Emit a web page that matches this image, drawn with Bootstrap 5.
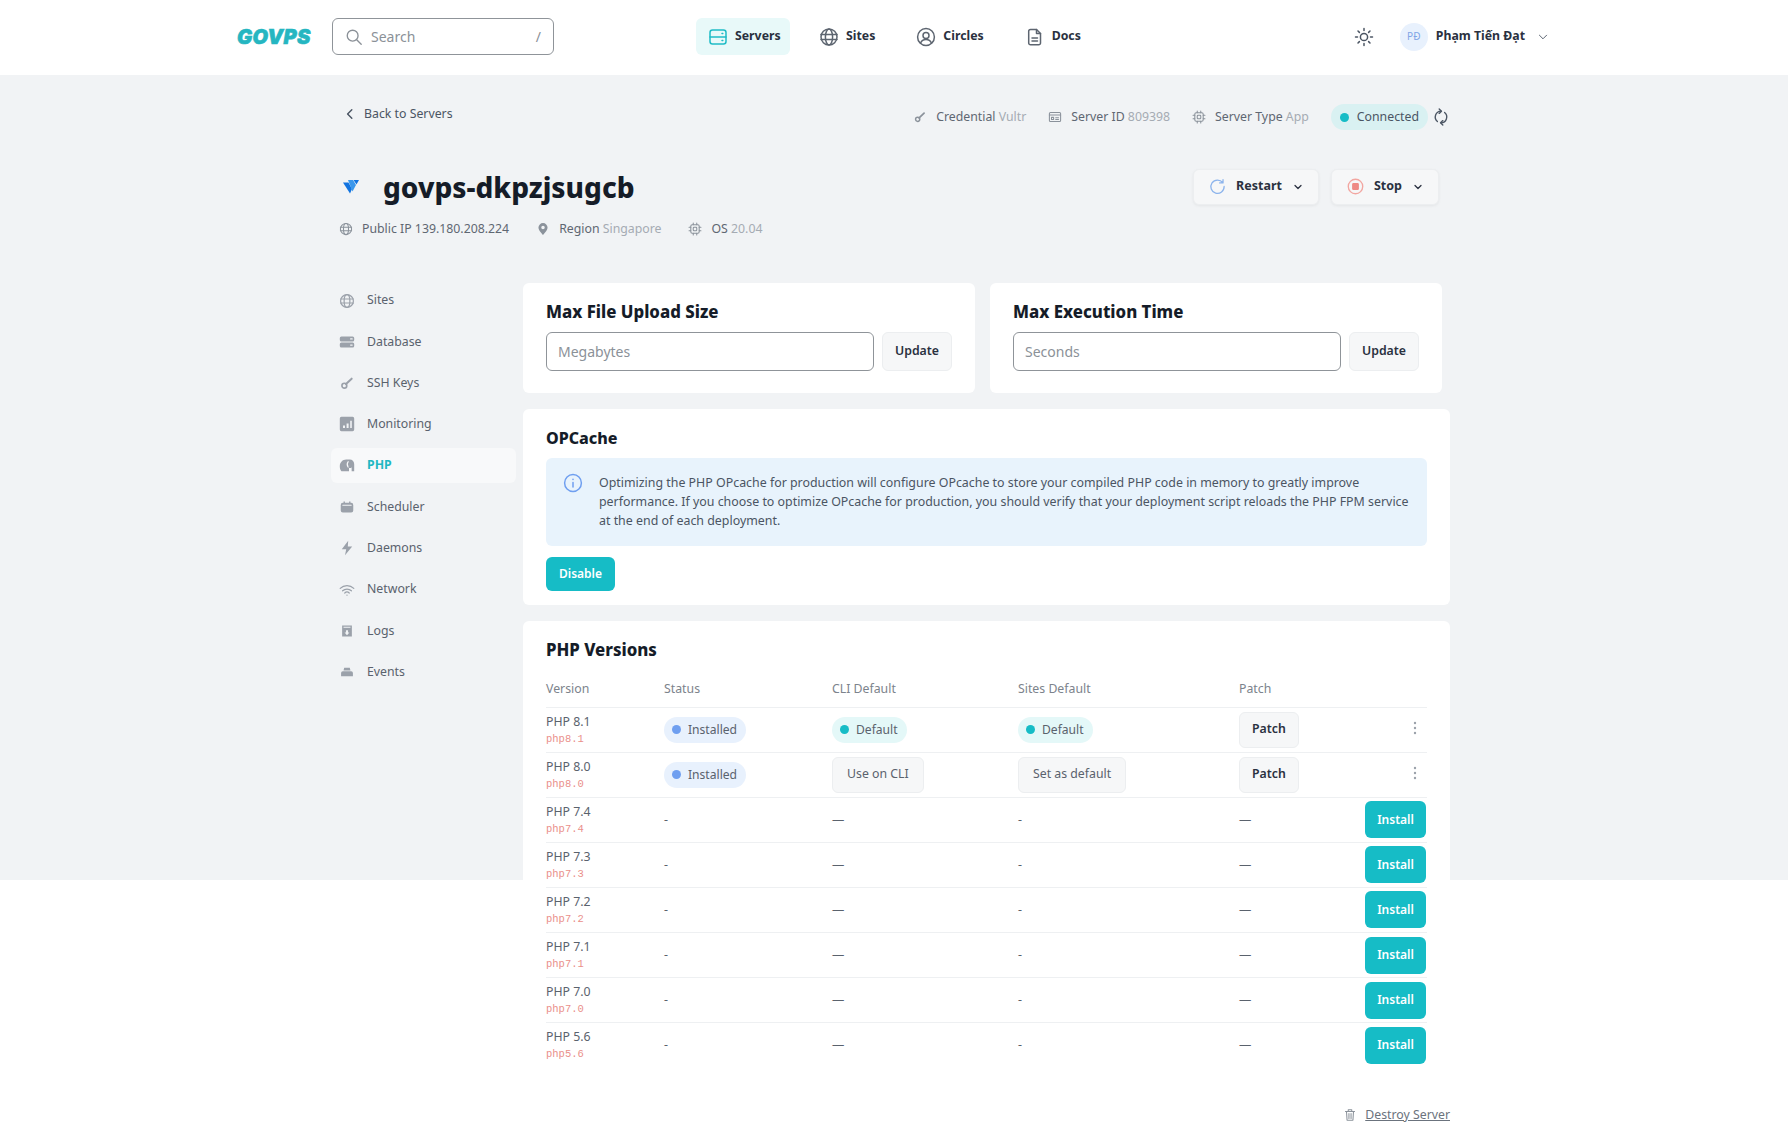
<!doctype html>
<html lang="en">
<head>
    <meta charset="utf-8">
    <meta name="viewport" content="width=device-width, initial-scale=1">
    <title>govps-dkpzjsugcb - PHP</title>
    <link href="https://cdn.jsdelivr.net/npm/bootstrap@5.3.3/dist/css/bootstrap.min.css" rel="stylesheet">
    <style>
        body { font-family: "Noto Sans", "Open Sans", sans-serif; font-size: 12.3px; color: #4b5563; background: #fff; }
        .ico { width: 18px; height: 18px; flex: none; fill: none; stroke: currentColor; stroke-width: 1.5; stroke-linecap: round; stroke-linejoin: round; }
        .ico-fill { fill: currentColor; stroke: none; }

        .topbar { height: 75px; padding: 0 239px 2px 237px; background: #fff; }
        .brand-logo { width: 95px; font-family: Inter, sans-serif; font-size: 20px; font-weight: 900; font-style: italic; color: #25b6c1; letter-spacing: .3px; -webkit-text-stroke: .6px #25b6c1; }
        .search-box { width: 222px; height: 37px; border: 1px solid #8f9499; border-radius: 6px; padding: 0 12px; margin-right: 142px; color: #8b9198; font-size: 14px; }
        .top-link { height: 37px; padding: 0 12px; margin-right: 17px; gap: 7px; border-radius: 6px; font-size: 12.3px; font-weight: 700; color: #2a3140; text-decoration: none; }
        .top-link .ico { width: 20px; height: 20px; color: #5d6570; }
        .top-link.on { width: 94px; background: #e8f9f9; }
        .top-link.on .ico { color: #1fbcc6; }
        .avatar { width: 28px; height: 28px; border-radius: 50%; background: #e8f1fd; color: #7fa5e6; font-size: 10px; }
        .user-name { font-size: 12.3px; font-weight: 700; color: #2a3140; margin-right: 12px; }

        .page-bg { background: linear-gradient(#f1f3f5, #f1f3f5) top / 100% 805px no-repeat; }
        .page-wrap { width: 1119px; margin-left: 331px; padding-top: 29px; }
        .meta-txt { font-size: 12.3px; color: #5f6772; gap: 9px; }
        .meta-txt .ico { width: 14px; height: 14px; color: #8b929b; }
        .meta-txt span { color: #a5abb3; }
        .back-link { color: #4b5563; font-size: 12.3px; text-decoration: none; padding-left: 13px; margin-top: -6px; }
        .back-link .ico { width: 12px; height: 12px; stroke-width: 2.4; }
        .conn-pill { height: 26px; padding: 0 9px; border-radius: 13px; background: #d9f1f2; color: #4b5563; font-weight: 400; font-size: 12.3px; }
        .dot { width: 9px; height: 9px; border-radius: 50%; background: #16bcc6; flex: none; }
        .dot-blue { background: #6f9ff0; }
        .server-name { font-size: 28px; font-weight: 800; color: #151c28; margin: 1px 0 0; line-height: 36px; }
        .act-btn { height: 36px; padding: 0 15px; background: #f6f7f8; border: 1px solid #eceef0; border-radius: 6px; box-shadow: 0 1px 3px rgba(0,0,0,.06); font-size: 12.5px; font-weight: 700; color: #2a3140; gap: 10px; }
        .act-btn .ico { width: 17px; height: 17px; }
        .act-btn .ico.caret { width: 10px; height: 10px; stroke-width: 2.5; margin-left: 1px; }

        .side-col { width: 192px; flex: none; padding-right: 7px; }
        .side-item { height: 35px; margin-bottom: 6.3px; padding: 0 0 0 8px; gap: 12px; background: transparent; border: 0; border-radius: 6px; color: #5a626d; font-size: 12.3px; }
        .side-item .ico { width: 16px; height: 16px; color: #9ba1aa; }
        .list-group-item.side-item.active { background: #f8f9fa; color: #1fb8c2; font-weight: 700; border: 0; margin-top: 0; }
        .main-col { width: 927px; flex: none; }

        .panel { border: 0; border-radius: 6px; padding: 18px 23px 0; background: #fff; }
        .panel-title { font-size: 16.8px; font-weight: 800; color: #151c28; line-height: 22px; margin: 0; }
        .panel-title.tight { font-size: 16px; }
        .mini-input { height: 39px; border: 1px solid #8f9499; border-radius: 6px; font-size: 14px; padding: 0 11px; box-shadow: none; }
        .mini-input::placeholder { color: #8b9198; }
        .soft-btn { height: 39px; width: 70px; flex: none; padding: 0; background: #f6f7f8; border: 1px solid #eceef0; border-radius: 6px; font-size: 12.3px; font-weight: 600; color: #2a3140; }
        .info-box { height: 88px; padding: 15px 14px 0 17px; margin: 9px 0 11px; background: #e8f3fc; border: 0; border-radius: 6px; color: #4b5563; font-size: 12.4px; line-height: 19px; gap: 16px; white-space: nowrap; }
        .info-box .ico { width: 20px; height: 20px; color: #6f9ff0; }
        .teal-btn { background: #16bcc6; border: 0; border-radius: 6px; color: #fff; font-size: 12px; font-weight: 600; }
        .teal-btn:hover { background: #12a9b2; color: #fff; }

        .ver-table { width: 881px; table-layout: fixed; margin: 10px 0 0; --bs-table-bg: transparent; }
        .ver-table th { height: 36px; padding: 0; font-weight: 400; color: #7c838c; font-size: 12.3px; border-bottom: 1px solid #eef0f2; vertical-align: middle; }
        .ver-table td { height: 45.1px; padding: 0; color: #5a626d; font-size: 12.3px; border-bottom: 1px solid #eef0f2; vertical-align: middle; }
        .ver-table tr:last-child td { border-bottom: 0; }
        .ver-name { line-height: 15px; }
        .ver-code { display: block; margin-top: 4px; font-family: "Liberation Mono", monospace; font-size: 10.5px; line-height: 13px; color: #ea8f8a; }
        .st-pill { height: 26px; padding: 0 9px 0 8px; border-radius: 13px; font-size: 12.1px; font-weight: 400; gap: 7px; color: #5a626d; }
        .st-blue { background: #e8f1fd; }
        .st-teal { background: #e4f8f8; }
        .tb-btn { height: 36px; padding: 0 14px; background: #f6f7f8; border: 1px solid #eceef0; border-radius: 6px; font-size: 12.3px; color: #5a626d; }
        .tb-btn.strong { padding: 0 12px; font-weight: 600; color: #2a3140; }
        .kebab { width: 14px; height: 14px; fill: #9ba1aa; margin-top: -4px; margin-right: 5px; }
        .install-btn { width: 61px; height: 37px; padding: 0; margin-right: 1px; }
        .dash { color: #7c838c; }

        .destroy-row { margin-top: 38px; color: #8b929b; font-size: 12.3px; }
        .destroy-row a { color: #6b737d; }
        .destroy-row .ico { width: 14px; height: 14px; }
    </style>
</head>
<body>
    <!-- iconos -->
    <svg width="0" height="0" class="position-absolute">
        <symbol id="i-globe" viewBox="0 0 20 20"><circle cx="10" cy="10" r="8"/><ellipse cx="10" cy="10" rx="3.6" ry="8"/><path d="M2 7.5h16M2 12.5h16"/></symbol>
        <symbol id="i-server" viewBox="0 0 20 20"><rect x="2" y="3" width="16" height="14" rx="2.5"/><path d="M2 10h16M14 6.5h.8M14 13.5h.8"/></symbol>
        <symbol id="i-circle" viewBox="0 0 20 20"><circle cx="10" cy="10" r="8.4"/><circle cx="10" cy="8.4" r="3"/><path d="M4.6 16c1-2.6 3-3.4 5.4-3.4s4.4.8 5.4 3.4"/></symbol>
        <symbol id="i-doc" viewBox="0 0 20 20"><path d="M5.5 2.5h6l4 4v9.5a1.8 1.8 0 0 1-1.8 1.8H5.5A1.8 1.8 0 0 1 3.7 16V4.3a1.8 1.8 0 0 1 1.8-1.8z"/><path d="M11.5 2.5v4h4M7 11h5.5M7 14h5.5"/></symbol>
        <symbol id="i-sun" viewBox="0 0 20 20"><circle cx="10" cy="10" r="3.6"/><path d="M10 1.5v2M10 16.5v2M1.5 10h2M16.500 10h2M4 4l1.400 1.400M14.600 14.600L16 16M4 16l1.400-1.400M14.600 5.400L16 4"/></symbol>
        <symbol id="i-search" viewBox="0 0 20 20"><circle cx="8.500" cy="8.500" r="6"/><path d="M13 13l5 5"/></symbol>
        <symbol id="i-down" viewBox="0 0 20 20"><path d="M4 7l6 6 6-6"/></symbol>
        <symbol id="i-left" viewBox="0 0 20 20"><path d="M13 3l-7 7 7 7"/></symbol>
        <symbol id="i-key" viewBox="-2 -2 24 24"><circle cx="6" cy="14" r="3.600" fill="none" stroke="currentColor" stroke-width="2.500"/><path d="M8.500 11.500L17 3.500" fill="none" stroke="currentColor" stroke-width="3"/></symbol>
        <symbol id="i-idcard" viewBox="0 0 20 20"><rect x="2" y="3.500" width="16" height="13" rx="1.500"/><path d="M2 7h16M5 10.500h3v3H5zM11 11h4M11 13.500h4"/></symbol>
        <symbol id="i-chip" viewBox="0 0 20 20"><rect x="4" y="4" width="12" height="12" rx="2"/><rect x="7.500" y="7.500" width="5" height="5" rx="1"/><path d="M7.500 1.500V4M12.500 1.500V4M7.500 16v2.500M12.500 16v2.500M1.500 7.500H4M1.500 12.500H4M16 7.500h2.500M16 12.500h2.500"/></symbol>
        <symbol id="i-sync" viewBox="0 0 20 20"><path d="M10 3.500A6.500 6.500 0 0 0 6 15M10 16.500A6.500 6.500 0 0 0 14 5"/><path d="M8 1l2.500 2.500L8 6M12 14l-2.500 2.500L12 19"/></symbol>
        <symbol id="i-pin" viewBox="0 0 20 20"><path d="M10 1.500a6.500 6.500 0 0 0-6.500 6.500c0 4.500 6.500 10.500 6.500 10.500S16.500 12.500 16.500 8A6.500 6.500 0 0 0 10 1.500zm0 9a2.500 2.500 0 1 1 0-5 2.500 2.500 0 0 1 0 5z"/></symbol>
        <symbol id="i-restart" viewBox="0 0 20 20"><path d="M16.200 5.500A7.800 7.800 0 1 0 17.800 10M16.500 1.800v4h-4"/></symbol>
        <symbol id="i-stop" viewBox="0 0 20 20"><circle cx="10" cy="10" r="8.500" fill="none" stroke="#f2a6a1" stroke-width="1.600"/><rect x="6" y="6" width="8" height="8" rx="1.500" fill="#ee8a85" stroke="none"/></symbol>
        <symbol id="i-db" viewBox="0 0 20 20"><rect x="1" y="3" width="18" height="6.400" rx="2"/><rect x="1" y="10.600" width="18" height="6.400" rx="2"/><path d="M14.500 6.200h2M14.500 13.800h2" stroke="#f1f3f5"/></symbol>
        <symbol id="i-chart" viewBox="0 0 20 20"><path fill-rule="evenodd" d="M3 1h14a2 2 0 0 1 2 2v14a2 2 0 0 1-2 2H3a2 2 0 0 1-2-2V3a2 2 0 0 1 2-2zm2 11v3h2.500v-3zm4.500-2.500V15H12V9.500zM14 6v9h2V6z"/></symbol>
        <symbol id="i-php" viewBox="0 0 20 20"><path d="M9 2C4.500 2 1 5.500 1 10.500c0 2.500.8 4.500 2 6h9.500v-4c1.500.3 2.700-.2 3.300-1v5H19V7.500C19 4.300 16.500 2 13.500 2z"/><path d="M11.500 4.500c-1.500 2-1.500 5 0 7" fill="none" stroke="#f8f9fa" stroke-width="1.300"/></symbol>
        <symbol id="i-cal" viewBox="-1.500 -1.500 23 23"><path d="M5 2h2v2h6V2h2v2h1a3 3 0 0 1 3 3v8a3 3 0 0 1-3 3H4a3 3 0 0 1-3-3V7a3 3 0 0 1 3-3h1z"/><path d="M4 7.500h12" stroke="#f1f3f5"/></symbol>
        <symbol id="i-bolt" viewBox="0 0 20 20"><path d="M11.500 1L3.500 11.500H9L7.500 19l9-11H11z"/></symbol>
        <symbol id="i-wifi" viewBox="0 0 20 20"><path d="M1.500 8a12 12 0 0 1 17 0M4.500 11a8 8 0 0 1 11 0M7.200 13.800a4 4 0 0 1 5.600 0M10 16.300v.2"/></symbol>
        <symbol id="i-logs" viewBox="-1.500 -1.500 23 23"><path fill-rule="evenodd" d="M3 2h14v16H3zm2 2v1.500h10V4zm3.500 5v3H6.500l3.500 4 3.500-4h-2V9z"/></symbol>
        <symbol id="i-events" viewBox="-1.500 -1.500 23 23"><path d="M6 4h8l1 4H5zM4 9h12a2.500 2.500 0 0 1 2.500 2.500V16h-17v-4.500A2.500 2.500 0 0 1 4 9z"/></symbol>
        <symbol id="i-info" viewBox="0 0 20 20"><circle cx="10" cy="10" r="8.400"/><path d="M10 9.500v4.500M10 6.200v.2"/></symbol>
        <symbol id="i-dots" viewBox="0 0 14 14"><circle cx="7" cy="2" r="1.200"/><circle cx="7" cy="7" r="1.200"/><circle cx="7" cy="12" r="1.200"/></symbol>
        <symbol id="i-trash" viewBox="0 0 20 20"><path d="M3.500 5h13M7.500 5V2.500h5V5M5 5l.8 12.500h8.400L15 5M8.500 8v7M11.500 8v7"/></symbol>
    </svg>

    <nav class="navbar topbar flex-nowrap justify-content-start">
        <a class="brand-logo text-decoration-none" href="#">GOVPS</a>
        <div class="search-box d-flex align-items-center gap-2">
            <svg class="ico"><use href="#i-search"/></svg>
            <span class="flex-grow-1">Search</span>
            <span>/</span>
        </div>
        <a class="top-link on d-flex align-items-center" href="#"><svg class="ico"><use href="#i-server"/></svg>Servers</a>
        <a class="top-link d-flex align-items-center" href="#"><svg class="ico"><use href="#i-globe"/></svg>Sites</a>
        <a class="top-link d-flex align-items-center" href="#"><svg class="ico"><use href="#i-circle"/></svg>Circles</a>
        <a class="top-link d-flex align-items-center" href="#"><svg class="ico"><use href="#i-doc"/></svg>Docs</a>
        <div class="ms-auto d-flex align-items-center">
            <svg class="ico" style="width:20px;height:20px;margin-right:26px"><use href="#i-sun"/></svg>
            <div class="avatar d-flex align-items-center justify-content-center me-2">PĐ</div>
            <span class="user-name">Phạm Tiến Đạt</span>
            <svg class="ico" style="width:12px;height:12px"><use href="#i-down"/></svg>
        </div>
    </nav>

    <div class="page-bg">
        <div class="page-wrap">
            <div class="d-flex justify-content-between align-items-center">
                <a class="back-link d-flex align-items-center gap-2" href="#"><svg class="ico"><use href="#i-left"/></svg>Back to Servers</a>
                <div class="d-flex align-items-center" style="gap:22px">
                    <div class="meta-txt d-flex align-items-center"><svg class="ico"><use href="#i-key"/></svg><div>Credential <span>Vultr</span></div></div>
                    <div class="meta-txt d-flex align-items-center"><svg class="ico"><use href="#i-idcard"/></svg><div>Server ID <span>809398</span></div></div>
                    <div class="meta-txt d-flex align-items-center"><svg class="ico"><use href="#i-chip"/></svg><div>Server Type <span>App</span></div></div>
                    <div class="d-flex align-items-center gap-1">
                        <div class="badge conn-pill d-flex align-items-center gap-2"><i class="dot"></i>Connected</div>
                        <svg class="ico" style="width:18px;height:18px"><use href="#i-sync"/></svg>
                    </div>
                </div>
            </div>

            <div class="d-flex justify-content-between align-items-center" style="margin-top:38px;padding:0 11px 0 12px">
                <div class="d-flex align-items-center">
                    <svg width="16" height="16" viewBox="0 0 16 16" style="margin-right:24px"><path d="M0 3.500h5.500l3.500 6.500-2 4.500z" fill="#1173e0"/><path d="M5 1h5l3 5-3.500 6.500z" fill="#3a97ec"/><path d="M10.500 1H16l-2.500 4.500z" fill="#1173e0"/></svg>
                    <h1 class="server-name">govps-dkpzjsugcb</h1>
                </div>
                <div class="d-flex" style="gap:12px">
                    <button class="btn act-btn d-flex align-items-center" type="button"><svg class="ico" style="color:#8cb4ec"><use href="#i-restart"/></svg>Restart<svg class="ico caret"><use href="#i-down"/></svg></button>
                    <button class="btn act-btn d-flex align-items-center" type="button"><svg class="ico"><use href="#i-stop"/></svg>Stop<svg class="ico caret"><use href="#i-down"/></svg></button>
                </div>
            </div>

            <div class="d-flex align-items-center" style="margin-top:14px;padding-left:8px;height:20px;gap:27px">
                <div class="meta-txt d-flex align-items-center"><svg class="ico"><use href="#i-globe"/></svg>Public IP 139.180.208.224</div>
                <div class="meta-txt d-flex align-items-center"><svg class="ico ico-fill"><use href="#i-pin"/></svg><div>Region <span>Singapore</span></div></div>
                <div class="meta-txt d-flex align-items-center"><svg class="ico"><use href="#i-chip"/></svg><div>OS <span>20.04</span></div></div>
            </div>

            <div class="d-flex" style="margin-top:44px">
                <div class="side-col">
                    <div class="list-group">
                        <a class="list-group-item side-item d-flex align-items-center" href="#"><svg class="ico"><use href="#i-globe"/></svg>Sites</a>
                        <a class="list-group-item side-item d-flex align-items-center" href="#"><svg class="ico ico-fill"><use href="#i-db"/></svg>Database</a>
                        <a class="list-group-item side-item d-flex align-items-center" href="#"><svg class="ico"><use href="#i-key"/></svg>SSH Keys</a>
                        <a class="list-group-item side-item d-flex align-items-center" href="#"><svg class="ico ico-fill"><use href="#i-chart"/></svg>Monitoring</a>
                        <a class="list-group-item side-item active d-flex align-items-center" href="#"><svg class="ico ico-fill"><use href="#i-php"/></svg>PHP</a>
                        <a class="list-group-item side-item d-flex align-items-center" href="#"><svg class="ico ico-fill"><use href="#i-cal"/></svg>Scheduler</a>
                        <a class="list-group-item side-item d-flex align-items-center" href="#"><svg class="ico ico-fill"><use href="#i-bolt"/></svg>Daemons</a>
                        <a class="list-group-item side-item d-flex align-items-center" href="#"><svg class="ico"><use href="#i-wifi"/></svg>Network</a>
                        <a class="list-group-item side-item d-flex align-items-center" href="#"><svg class="ico ico-fill"><use href="#i-logs"/></svg>Logs</a>
                        <a class="list-group-item side-item d-flex align-items-center" href="#"><svg class="ico ico-fill"><use href="#i-events"/></svg>Events</a>
                    </div>
                </div>

                <div class="main-col">
                    <div class="d-flex" style="width:919px;gap:15px">
                        <div class="card panel flex-fill" style="height:110px;width:452px">
                            <h5 class="panel-title" style="margin-bottom:9px">Max File Upload Size</h5>
                            <div class="d-flex gap-2">
                                <input class="form-control mini-input" type="text" placeholder="Megabytes">
                                <button class="btn soft-btn" type="button">Update</button>
                            </div>
                        </div>
                        <div class="card panel flex-fill" style="height:110px;width:452px">
                            <h5 class="panel-title" style="margin-bottom:9px">Max Execution Time</h5>
                            <div class="d-flex gap-2">
                                <input class="form-control mini-input" type="text" placeholder="Seconds">
                                <button class="btn soft-btn" type="button">Update</button>
                            </div>
                        </div>
                    </div>

                    <div class="card panel mt-3" style="height:196px">
                        <h5 class="panel-title tight">OPCache</h5>
                        <div class="alert info-box d-flex">
                            <svg class="ico"><use href="#i-info"/></svg>
                            <div>Optimizing the PHP OPcache for production will configure OPcache to store your compiled PHP code in memory to greatly improve<br>performance. If you choose to optimize OPcache for production, you should verify that your deployment script reloads the PHP FPM service<br>at the end of each deployment.</div>
                        </div>
                        <div><button class="btn teal-btn" type="button" style="height:34px;width:69px;padding:0">Disable</button></div>
                    </div>

                    <div class="card panel mt-3">
                        <h5 class="panel-title">PHP Versions</h5>
                        <table class="table ver-table" id="verTable">
                            <thead>
                                <tr><th style="width:118px">Version</th><th style="width:168px">Status</th><th style="width:186px">CLI Default</th><th style="width:221px">Sites Default</th><th style="width:120px">Patch</th><th></th></tr>
                            </thead>
                            <tbody></tbody>
                        </table>
                    </div>

                    <div class="destroy-row d-flex justify-content-end align-items-center gap-2">
                        <svg class="ico"><use href="#i-trash"/></svg><a href="#">Destroy Server</a>
                    </div>
                </div>
            </div>
        </div>
    </div>

    <script src="https://cdn.jsdelivr.net/npm/bootstrap@5.3.3/dist/js/bootstrap.bundle.min.js"></script>
    <script>
        // filas de la tabla
        const versiones = [
            ['PHP 8.1', 'php8.1', 1], ['PHP 8.0', 'php8.0', 2], ['PHP 7.4', 'php7.4', 0], ['PHP 7.3', 'php7.3', 0],
            ['PHP 7.2', 'php7.2', 0], ['PHP 7.1', 'php7.1', 0], ['PHP 7.0', 'php7.0', 0], ['PHP 5.6', 'php5.6', 0]
        ];
        const kebab = '<svg class="kebab"><use href="#i-dots"/></svg>';
        const cuerpo = document.querySelector('#verTable tbody');
        versiones.forEach(v => {
            const fila = document.createElement('tr');
            const nombre = `<td><div class="ver-name">${v[0]}<code class="ver-code">${v[1]}</code></div></td>`;
            const instalado = '<td><span class="badge st-pill st-blue d-inline-flex align-items-center"><i class="dot dot-blue"></i>Installed</span></td>';
            const porDefecto = '<td><span class="badge st-pill st-teal d-inline-flex align-items-center"><i class="dot"></i>Default</span></td>';
            const parche = '<td><button class="btn tb-btn strong" type="button">Patch</button></td>';
            if (v[2] === 1) {
                fila.innerHTML = nombre + instalado + porDefecto + porDefecto + parche + `<td class="text-end">${kebab}</td>`;
            } else if (v[2] === 2) {
                fila.innerHTML = nombre + instalado + '<td><button class="btn tb-btn" type="button">Use on CLI</button></td><td><button class="btn tb-btn" type="button">Set as default</button></td>' + parche + `<td class="text-end">${kebab}</td>`;
            } else {
                fila.innerHTML = nombre + '<td class="dash">-</td><td class="dash">—</td><td class="dash">-</td><td class="dash">—</td><td class="text-end"><button class="btn teal-btn install-btn" type="button">Install</button></td>';
            }
            cuerpo.appendChild(fila);
        });
    </script>
</body>
</html>
